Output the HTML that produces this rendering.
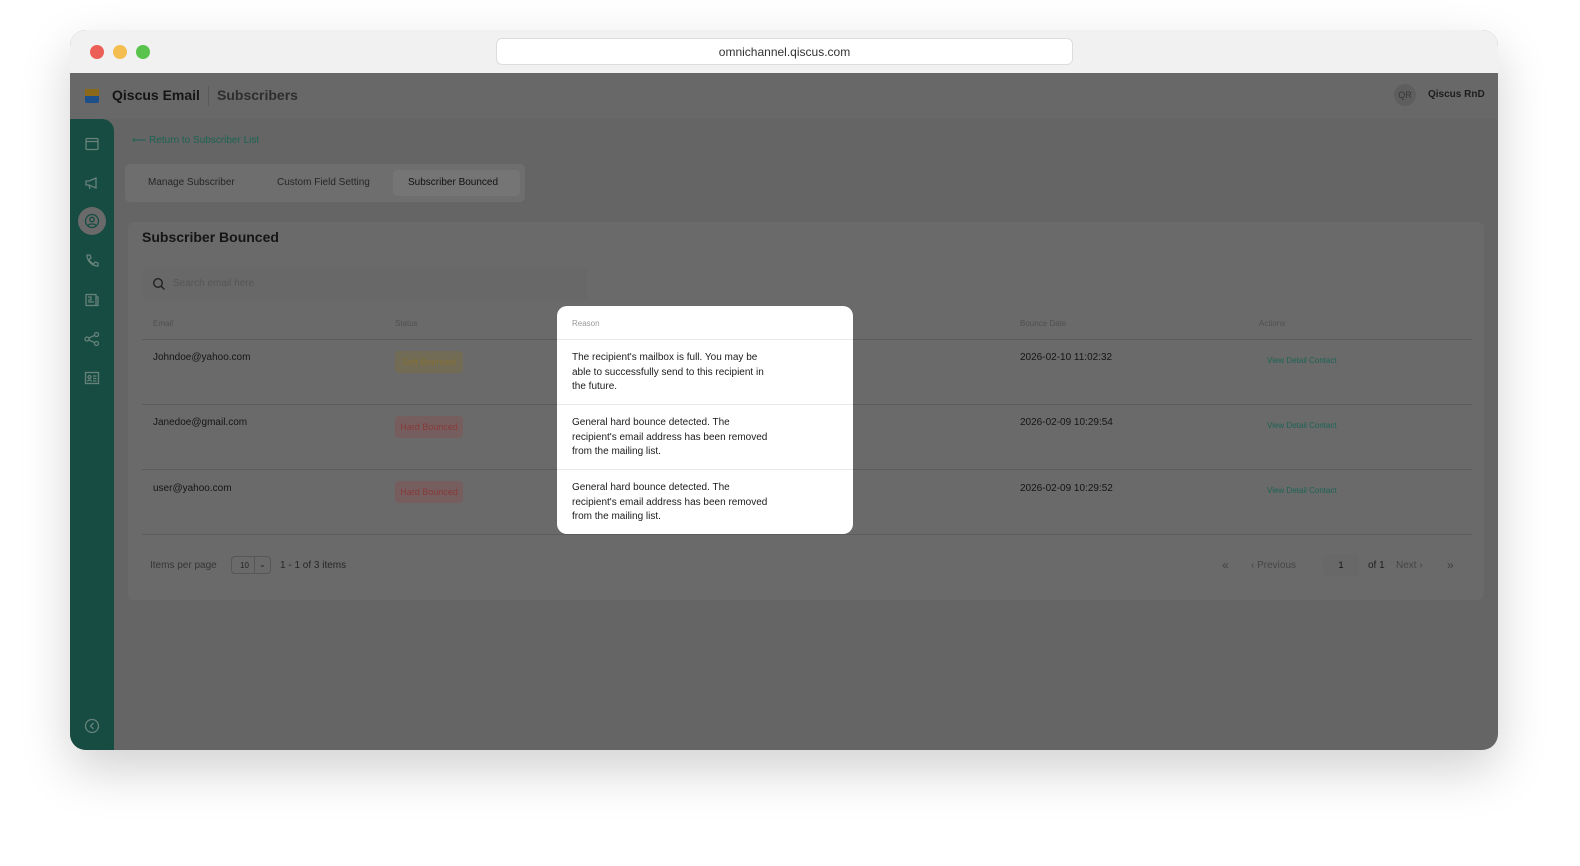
<!DOCTYPE html>
<html><head><meta charset="utf-8"><style>
*{box-sizing:border-box;margin:0;padding:0}
body{width:1580px;height:866px;background:#fff;font-family:"Liberation Sans",sans-serif;position:relative;overflow:hidden}
.win{position:absolute;left:70px;top:30px;width:1428px;height:720px;border-radius:16px;overflow:hidden;box-shadow:0 20px 50px rgba(0,0,0,.18);background:#656565}
.tb{position:absolute;left:0;top:0;width:100%;height:43px;background:#f1f1f1}
.dot{position:absolute;top:15px;width:14px;height:14px;border-radius:50%}
.url{position:absolute;left:426px;top:8px;width:577px;height:27px;background:#fff;border:1px solid #ddd;border-radius:6px;text-align:center;font-size:12px;line-height:26px;color:#333}
.hdr{position:absolute;left:0;top:43px;width:100%;height:46px;background:#686868}
.side{position:absolute;left:0;top:89px;width:44px;height:631px;background:#164c41;border-top-right-radius:12px}
.ic{position:absolute;left:14px;width:16px;height:16px}
.t{position:absolute;white-space:nowrap}
.card{position:absolute;left:58px;top:192px;width:1356px;height:378px;background:#6a6a6a;border-radius:6px}
.row{position:absolute;left:72px;width:1330px;height:1px;background:#5c5c5c}
.badge{position:absolute;left:325px;width:68px;height:22px;border-radius:4px;font-size:9px;text-align:center;line-height:22px}
.pop{position:absolute;left:487px;top:276px;width:296px;height:228px;background:#fff;border-radius:10px;overflow:hidden}
.pop .r{position:absolute;left:15px;font-size:10px;line-height:14.5px;color:#1b1b1b}
.pop .hl{position:absolute;left:0;width:100%;height:1px;background:#e8e8e8}
</style></head><body>
<div class="win">
 <div class="tb">
  <div class="dot" style="left:20px;background:#ec5f57"></div>
  <div class="dot" style="left:43px;background:#f4bd4f"></div>
  <div class="dot" style="left:66px;background:#5ac34d"></div>
  <div class="url">omnichannel.qiscus.com</div>
 </div>
 <div class="hdr">
  <div style="position:absolute;left:15px;top:16px;width:14px;height:14px;background:#1d4f8a;border-radius:2px"></div>
  <div style="position:absolute;left:15px;top:16px;width:14px;height:7px;background:#8a6a1a"></div>
  <div class="t" style="left:42px;top:14px;font-size:14px;font-weight:bold;color:#151515">Qiscus Email</div>
  <div style="position:absolute;left:138px;top:13px;width:1px;height:20px;background:#5a5a5a"></div>
  <div class="t" style="left:147px;top:14px;font-size:14px;font-weight:bold;color:#2e2e2e">Subscribers</div>
  <div style="position:absolute;left:1324px;top:11px;width:22px;height:22px;border-radius:50%;background:#5e5e5e;color:#363636;font-size:9px;text-align:center;line-height:22px">QR</div>
  <div class="t" style="left:1358px;top:16px;font-size:10px;font-weight:bold;color:#1d1d1d">Qiscus RnD</div>
 </div>
 <div class="side">
  <svg class="ic" style="top:17px" viewBox="0 0 16 16" fill="none" stroke="#66827a" stroke-width="1.3"><rect x="2" y="2.5" width="12" height="11" rx="1"/><path d="M2 5.5h12"/></svg>
  <svg class="ic" style="top:56px" viewBox="0 0 16 16" fill="none" stroke="#66827a" stroke-width="1.3"><path d="M2 6h3l7-3v10l-7-3H2zM5 10l1 4"/></svg>
  <div style="position:absolute;left:8px;top:88px;width:28px;height:28px;border-radius:50%;background:#6a6a6a"></div>
  <svg class="ic" style="top:94px" viewBox="0 0 16 16" fill="none" stroke="#164c41" stroke-width="1.3"><circle cx="8" cy="8" r="6.5"/><circle cx="8" cy="6.5" r="2.2"/><path d="M4 12.5c1-2 7-2 8 0"/></svg>
  <svg class="ic" style="top:134px" viewBox="0 0 16 16" fill="none" stroke="#66827a" stroke-width="1.3"><path d="M3 2h3l1 3-2 1.5c1 2 2.5 3.5 4.5 4.5L11 9l3 1v3c-6 0-11-5-11-11z"/></svg>
  <svg class="ic" style="top:173px" viewBox="0 0 16 16" fill="none" stroke="#66827a" stroke-width="1.3"><rect x="2" y="2.5" width="10" height="11"/><path d="M12 5h2v8.5H12M4 5h3v3H4M4 10h6"/></svg>
  <svg class="ic" style="top:212px" viewBox="0 0 16 16" fill="none" stroke="#66827a" stroke-width="1.3"><circle cx="3" cy="8" r="2"/><circle cx="12.5" cy="3.5" r="2"/><circle cx="12.5" cy="12.5" r="2"/><path d="M5 7l5.7-2.7M5 9l5.7 2.7"/></svg>
  <svg class="ic" style="top:251px" viewBox="0 0 16 16" fill="none" stroke="#66827a" stroke-width="1.3"><rect x="1.5" y="2.5" width="13" height="11"/><circle cx="5.5" cy="7" r="1.5"/><path d="M3.5 11.5c.5-2 3.5-2 4 0M9 6h3.5M9 8.5h3.5M9 11h3.5"/></svg>
  <svg class="ic" style="top:599px" viewBox="0 0 16 16" fill="none" stroke="#66827a" stroke-width="1.3"><circle cx="8" cy="8" r="6.5"/><path d="M9.5 5L6.5 8l3 3"/></svg>
 </div>
 <div class="t" style="left:62px;top:105px;font-size:10px;color:#1c6453">⟵ Return to Subscriber List</div>
 <div style="position:absolute;left:55px;top:134px;width:400px;height:38px;background:#6e6e6e;border-radius:5px"></div>
 <div style="position:absolute;left:323px;top:140px;width:127px;height:26px;background:#757575;border-radius:4px"></div>
 <div class="t" style="left:78px;top:147px;font-size:10px;color:#262626">Manage Subscriber</div>
 <div class="t" style="left:207px;top:147px;font-size:10px;color:#262626">Custom Field Setting</div>
 <div class="t" style="left:338px;top:147px;font-size:10px;color:#111">Subscriber Bounced</div>
 <div class="card"></div>
 <div class="t" style="left:72px;top:199px;font-size:14px;font-weight:bold;color:#151515">Subscriber Bounced</div>
 <div style="position:absolute;left:72px;top:238px;width:445px;height:32px;background:#686868;border-radius:4px"></div>
 <svg style="position:absolute;left:82px;top:247px" width="14" height="14" viewBox="0 0 14 14" fill="none" stroke="#222" stroke-width="1.4"><circle cx="6" cy="6" r="4.3"/><path d="M9.2 9.2L12.5 12.5"/></svg>
 <div class="t" style="left:103px;top:248px;font-size:10px;color:#565656">Search email here</div>
 <div class="t" style="left:83px;top:289px;font-size:8px;color:#505050">Email</div>
 <div class="t" style="left:325px;top:289px;font-size:8px;color:#505050">Status</div>
 <div class="t" style="left:950px;top:289px;font-size:8px;color:#505050">Bounce Date</div>
 <div class="t" style="left:1189px;top:289px;font-size:8px;color:#505050">Actions</div>
 <div class="row" style="top:309px"></div>
 <div class="row" style="top:374px"></div>
 <div class="row" style="top:439px"></div>
 <div class="row" style="top:504px"></div>
 <div class="t" style="left:83px;top:322px;font-size:10px;color:#151515">Johndoe@yahoo.com</div>
 <div class="t" style="left:83px;top:387px;font-size:10px;color:#151515">Janedoe@gmail.com</div>
 <div class="t" style="left:83px;top:453px;font-size:10px;color:#151515">user@yahoo.com</div>
 <div class="badge" style="top:321px;background:#726b56;color:#857032">Soft Bounced</div>
 <div class="badge" style="top:386px;background:#765e5e;color:#883a3a">Hard Bounced</div>
 <div class="badge" style="top:451px;background:#765e5e;color:#883a3a">Hard Bounced</div>
 <div class="t" style="left:950px;top:322px;font-size:10px;color:#151515">2026-02-10 11:02:32</div>
 <div class="t" style="left:950px;top:387px;font-size:10px;color:#151515">2026-02-09 10:29:54</div>
 <div class="t" style="left:950px;top:453px;font-size:10px;color:#151515">2026-02-09 10:29:52</div>
 <div class="t" style="left:1197px;top:326px;font-size:8px;color:#1c6453">View Detail Contact</div>
 <div class="t" style="left:1197px;top:391px;font-size:8px;color:#1c6453">View Detail Contact</div>
 <div class="t" style="left:1197px;top:456px;font-size:8px;color:#1c6453">View Detail Contact</div>
 <div class="t" style="left:80px;top:530px;font-size:10px;color:#363636">Items per page</div>
 <div style="position:absolute;left:161px;top:526px;width:40px;height:18px;border:1px solid #575757;border-radius:4px;font-size:8px;color:#222;padding:4px 0 0 8px">10 <span style="position:absolute;left:22px;top:0;height:16px;border-left:1px solid #575757;padding-left:4px;line-height:16px">⌄</span></div>
 <div class="t" style="left:210px;top:530px;font-size:10px;color:#262626">1 - 1 of 3 items</div>
 <div class="t" style="left:1152px;top:528px;font-size:12px;color:#404040">«</div>
 <div class="t" style="left:1181px;top:530px;font-size:10px;color:#454545">‹ Previous</div>
 <div style="position:absolute;left:1253px;top:524px;width:36px;height:22px;background:#686868;border-radius:4px;font-size:9px;text-align:center;line-height:22px;color:#111">1</div>
 <div class="t" style="left:1298px;top:530px;font-size:10px;color:#1e1e1e">of 1</div>
 <div class="t" style="left:1326px;top:530px;font-size:10px;color:#454545">Next ›</div>
 <div class="t" style="left:1377px;top:528px;font-size:12px;color:#404040">»</div>
 <div class="pop">
  <div class="t" style="left:15px;top:13px;font-size:8px;color:#999">Reason</div>
  <div class="hl" style="top:33px"></div>
  <div class="r" style="top:45px">The recipient's mailbox is full. You may be<br>able to successfully send to this recipient in<br>the future.</div>
  <div class="hl" style="top:98px"></div>
  <div class="r" style="top:110px">General hard bounce detected. The<br>recipient's email address has been removed<br>from the mailing list.</div>
  <div class="hl" style="top:163px"></div>
  <div class="r" style="top:175px">General hard bounce detected. The<br>recipient's email address has been removed<br>from the mailing list.</div>
 </div>
</div>
</body></html>
